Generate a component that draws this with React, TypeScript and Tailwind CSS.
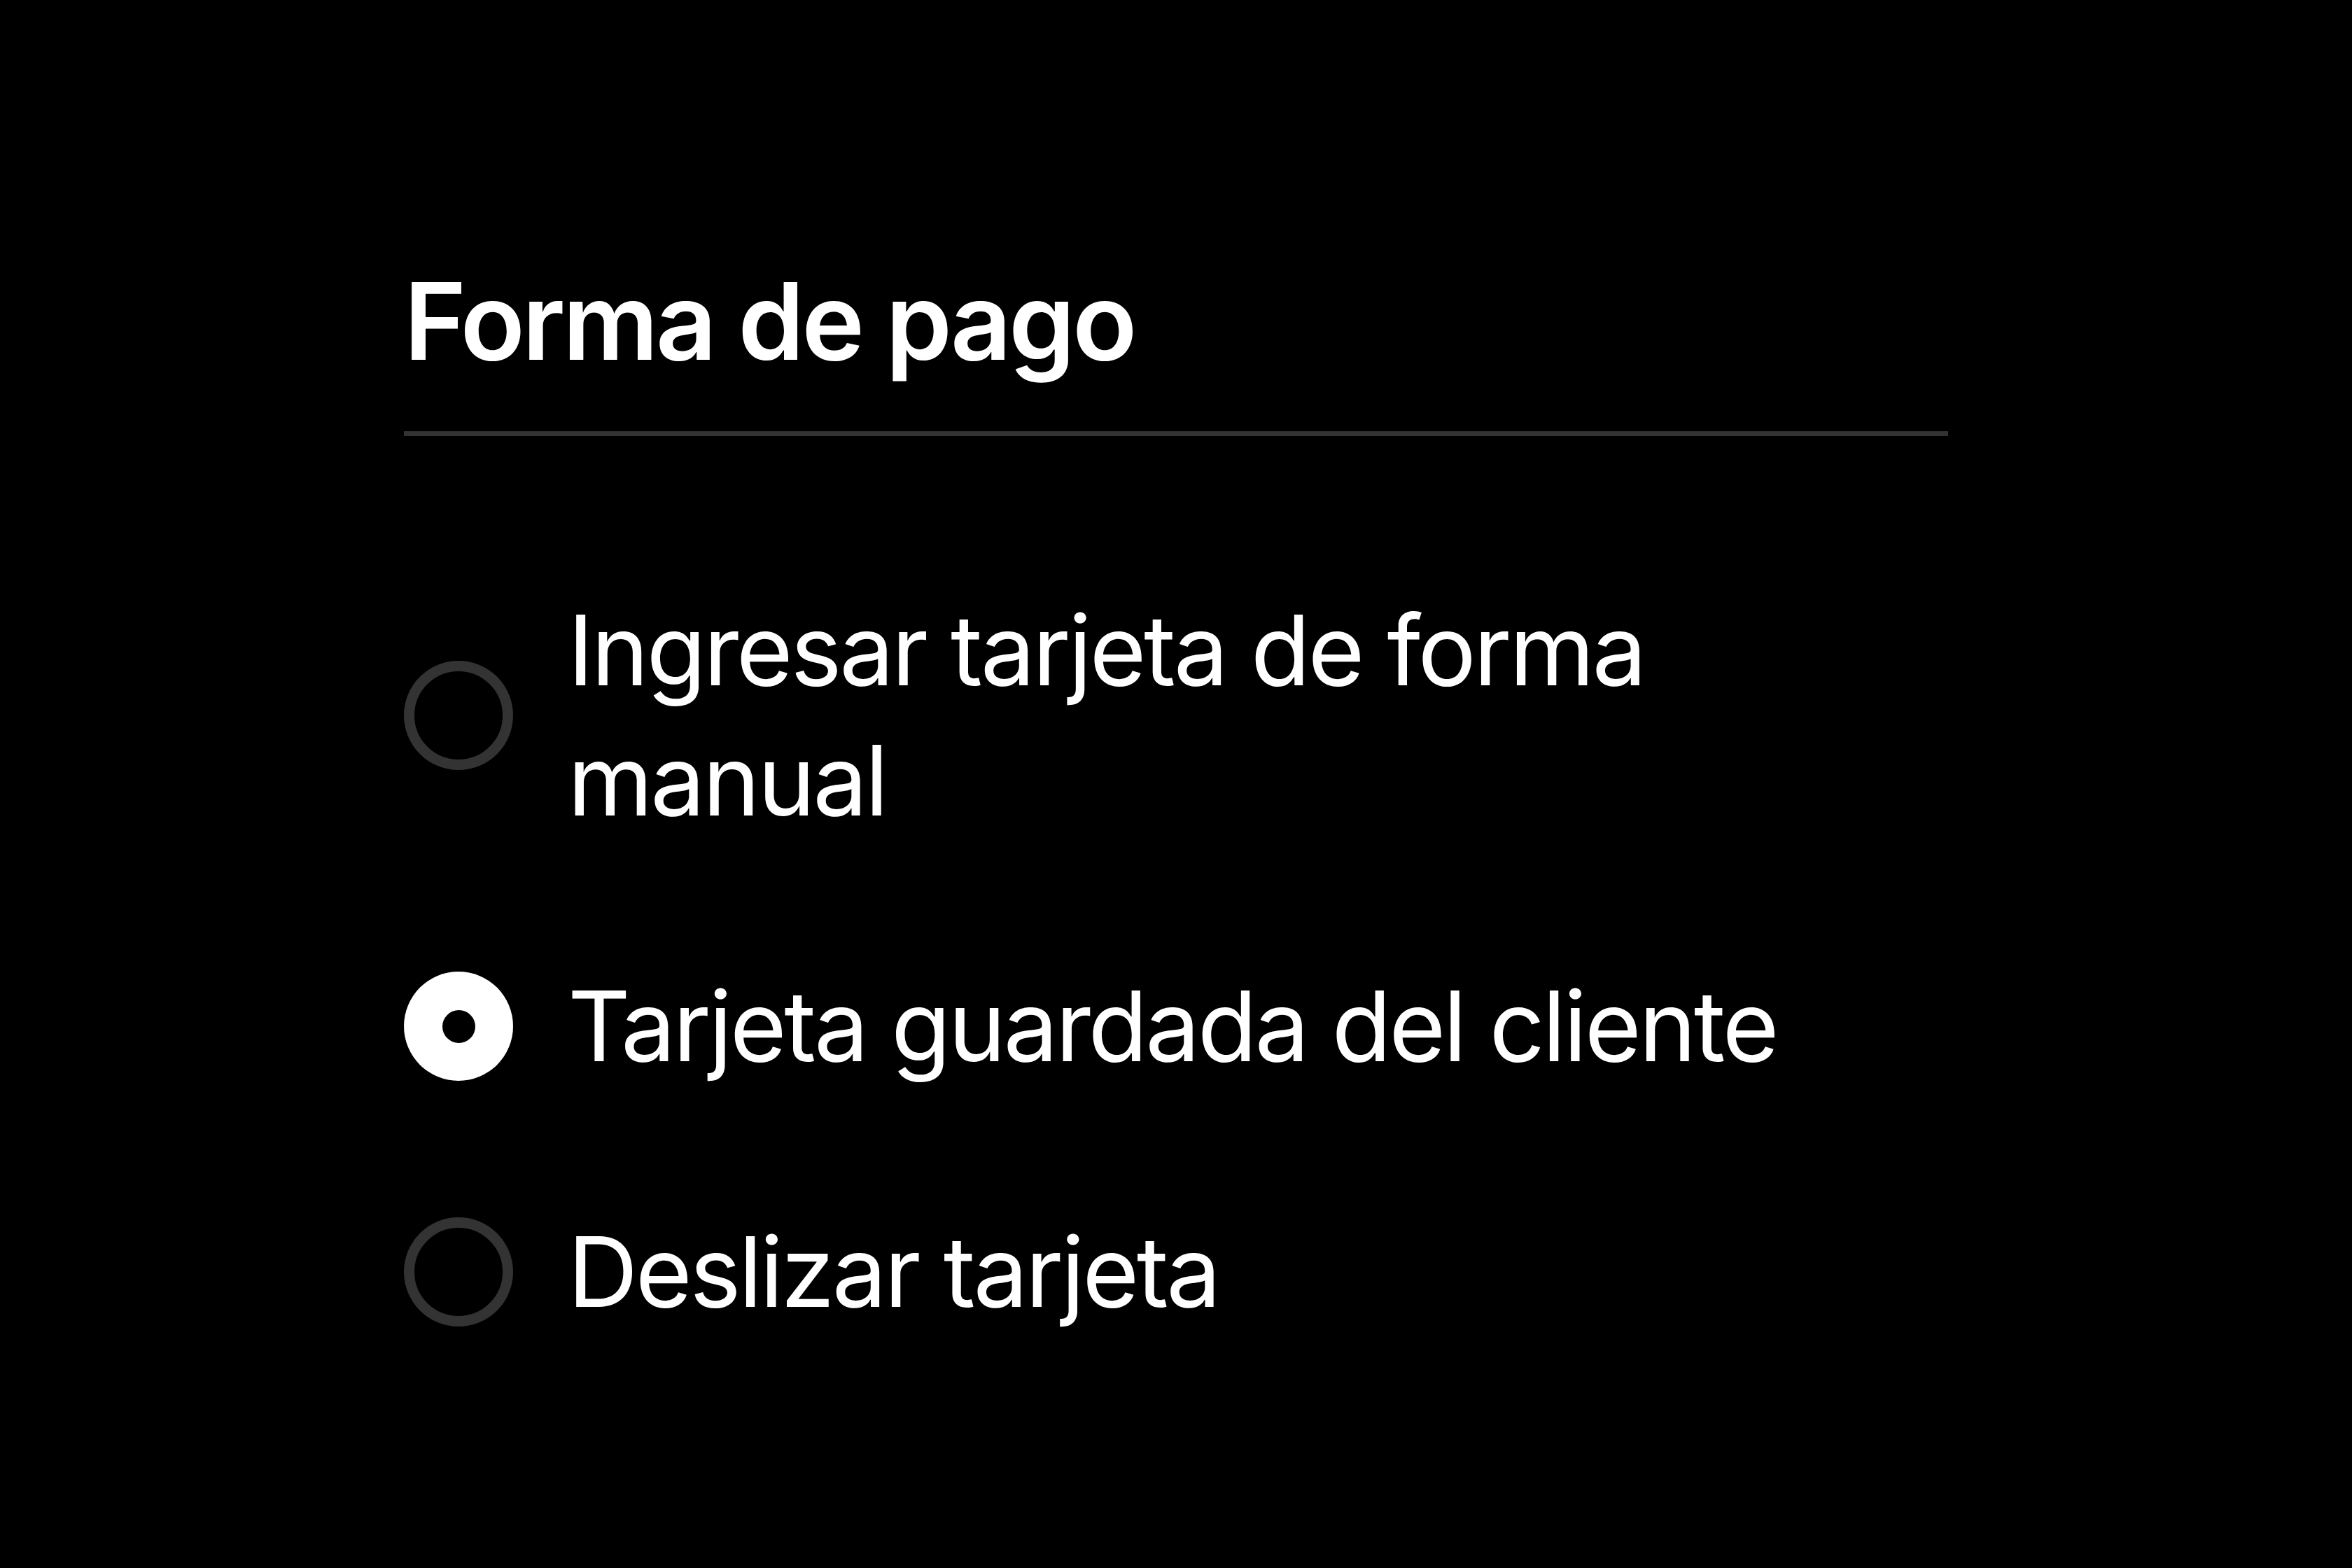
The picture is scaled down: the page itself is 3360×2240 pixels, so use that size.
import { useState } from "react";

const options = [
  { id: "manual", label: "Ingresar tarjeta de forma manual" },
  { id: "saved", label: "Tarjeta guardada del cliente" },
  { id: "swipe", label: "Deslizar tarjeta" },
];

function Radio({ checked }: { checked: boolean }) {
  if (checked) {
    return (
      <span className="flex h-[156px] w-[156px] shrink-0 items-center justify-center rounded-full bg-white">
        <span className="h-[47px] w-[47px] rounded-full bg-black" />
      </span>
    );
  }
  return <span className="h-[156px] w-[156px] shrink-0 rounded-full border-[15px] border-[#333333]" />;
}

export default function App() {
  const [selected, setSelected] = useState("saved");

  return (
    <div
      className="min-h-[2240px] w-full bg-black text-white"
      style={{ fontFamily: "Inter, 'Liberation Sans', sans-serif" }}
    >
      <div className="ml-[577px] w-[2206px] pt-[383px]">
        <h2 className="text-[152px] font-semibold leading-[152px] tracking-[-4px]">Forma de pago</h2>
        <div className="mt-[81px] h-[7px] w-full bg-[#333333]" />

        <div className="mt-[213px] flex flex-col gap-[165px]">
          {options.map((o) => (
            <label
              key={o.id}
              className="flex cursor-pointer items-center gap-[78px]"
              onClick={() => setSelected(o.id)}
            >
              <Radio checked={selected === o.id} />
              <span className="text-[139px] font-normal leading-[186px] tracking-[-3.5px]">{o.label}</span>
            </label>
          ))}
        </div>
      </div>
    </div>
  );
}
